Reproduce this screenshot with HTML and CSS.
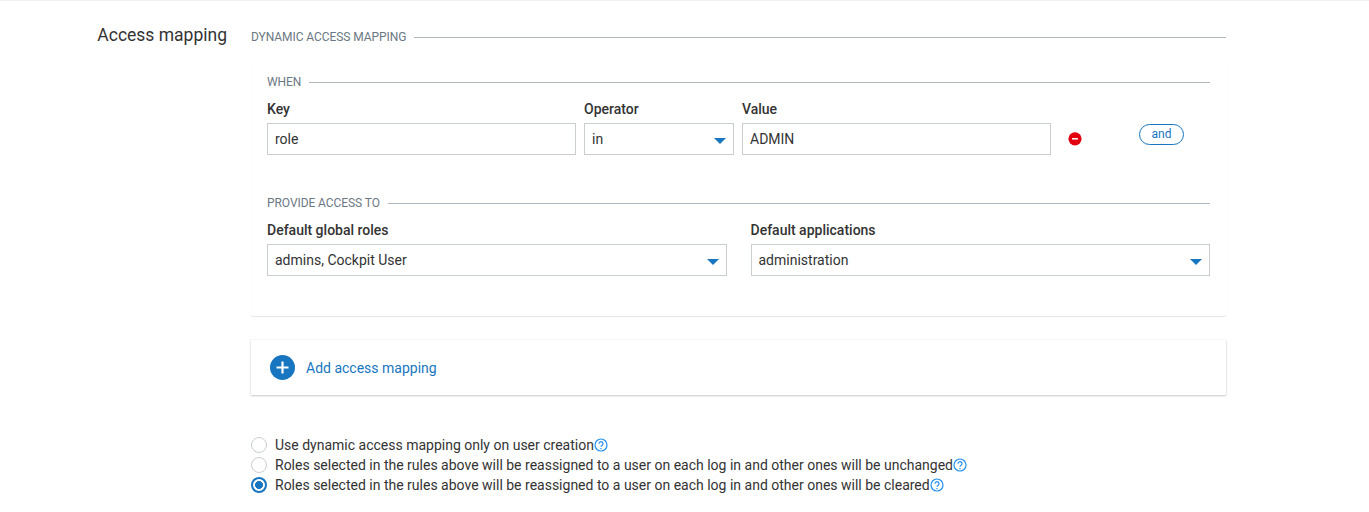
FILE: index.html
```html
<!DOCTYPE html>
<html lang="en">
<head>
<meta charset="utf-8">
<title>Access mapping</title>
<link rel="stylesheet" href="styles.css">
</head>
<body>
<main class="section">
  <h2 class="section-title">Access mapping</h2>
  <div class="content">
    <div class="legend">DYNAMIC ACCESS MAPPING</div>
    <section class="card">
      <div class="legend">WHEN</div>
      <div class="rule">
        <div class="field field-wide"><span class="label">Key</span><div class="control">role</div></div>
        <div class="field field-op"><span class="label">Operator</span><div class="control">in<svg class="caret" viewBox="0 0 12 6"><path d="M0 0h12L6 6z"/></svg></div></div>
        <div class="field field-wide"><span class="label">Value</span><div class="control">ADMIN</div></div>
        <svg class="remove" viewBox="0 0 14 14"><circle cx="7" cy="6.8" r="6.6" fill="#e3000f"/><path d="M4 6.8h6" stroke="#fff" stroke-width="1.5"/></svg>
        <button class="and" type="button">and</button>
      </div>
      <div class="legend">PROVIDE ACCESS TO</div>
      <div class="access">
        <div class="field"><span class="label">Default global roles</span><div class="control">admins, Cockpit User<svg class="caret" viewBox="0 0 12 6"><path d="M0 0h12L6 6z"/></svg></div></div>
        <div class="field"><span class="label">Default applications</span><div class="control">administration<svg class="caret" viewBox="0 0 12 6"><path d="M0 0h12L6 6z"/></svg></div></div>
      </div>
    </section>
    <section class="add">
      <svg class="plus" viewBox="0 0 26 26"><circle cx="12.5" cy="12.5" r="12.5" fill="#1776bf"/><path d="M12.5 6.5v12M6.5 12.5h12" stroke="#fff" stroke-width="2.2"/></svg>
      <span>Add access mapping</span>
    </section>
    <div class="options">
      <div class="option"><span class="radio"></span><span class="option-text">Use dynamic access mapping only on user creation</span><svg class="help" viewBox="0 0 14 14"><circle cx="7" cy="7" r="6"/><path d="M5 5.7a2 2 0 1 1 3.1 1.6Q7 8 7 8.8M7 9.9v1.3"/></svg></div>
      <div class="option"><span class="radio"></span><span class="option-text">Roles selected in the rules above will be reassigned to a user on each log in and other ones will be unchanged</span><svg class="help" viewBox="0 0 14 14"><circle cx="7" cy="7" r="6"/><path d="M5 5.7a2 2 0 1 1 3.1 1.6Q7 8 7 8.8M7 9.9v1.3"/></svg></div>
      <div class="option"><span class="radio checked"></span><span class="option-text">Roles selected in the rules above will be reassigned to a user on each log in and other ones will be cleared</span><svg class="help" viewBox="0 0 14 14"><circle cx="7" cy="7" r="6"/><path d="M5 5.7a2 2 0 1 1 3.1 1.6Q7 8 7 8.8M7 9.9v1.3"/></svg></div>
    </div>
  </div>
</main>
</body>
</html>
```
FILE: styles.css
```css
* { box-sizing: border-box; }
body {
  margin: 0;
  background: #fff;
  color: #333;
  font: 14px/20px Roboto, sans-serif;
}
.section {
  display: flex;
  gap: 24px;
  height: 512px;
  padding: 26px 143px 0 0;
  border-top: 1px solid #f0f0f0;
  overflow: hidden;
}
.section-title {
  width: 227px;
  margin: -4px 0 0;
  font-size: 17.5px;
  font-weight: 400;
  line-height: 24px;
  text-align: right;
}
.content { flex: 1; min-width: 0; }
.legend {
  display: flex;
  align-items: center;
  gap: 8px;
  height: 20px;
  color: #6b7883;
  font-size: 12px;
  letter-spacing: -.07px;
}
.legend::after {
  content: "";
  flex: 1;
  height: 1px;
  margin-top: 1px;
  background: #afb8bf;
}
.card {
  height: 260px;
  margin-top: 9px;
  padding: 16px;
  border-radius: 2px;
  box-shadow: 0 1px 1px rgba(0, 0, 0, .1), 0 0 1px rgba(0, 0, 0, .06);
  clip-path: inset(2px -3px -4px -3px);
}
.rule {
  display: flex;
  gap: 8px;
  height: 56px;
  margin: 7px 0 38px;
}
.field { display: flex; flex-direction: column; gap: 4px; }
.field-wide { width: 309px; }
.field-op { width: 150px; }
.label { font-weight: 500; }
.control {
  display: flex;
  align-items: center;
  justify-content: space-between;
  height: 32px;
  padding: 0 7px;
  border: 1px solid #c9cdd2;
  background: #fff;
}
.caret { width: 12px; height: 6px; margin-top: 3px; fill: #1776bf; }
.remove { width: 14px; height: 14px; margin: 33px 0 0 9px; }
.and {
  width: 45px;
  height: 21px;
  margin: 25px 0 0 49px;
  padding: 0;
  border: 1px solid #1776bf;
  border-radius: 11px;
  background: #fff;
  color: #1776bf;
  font: 12px/17px Roboto, sans-serif;
}
.access {
  display: grid;
  grid-template-columns: 1fr 1fr;
  gap: 24px;
  margin-top: 7px;
}
.add {
  display: flex;
  align-items: center;
  gap: 10px;
  height: 55px;
  margin-top: 24px;
  padding-left: 19px;
  color: #1776bf;
  box-shadow: 0 1px 2px rgba(0, 0, 0, .2), 0 0 1px rgba(0, 0, 0, .14);
}
.plus { width: 26px; height: 26px; }
.options { margin-top: 40px; }
.option { display: flex; align-items: center; height: 20px; white-space: nowrap; }
.radio {
  width: 16px;
  height: 16px;
  margin-right: 8px;
  border: 1px solid #c9cdd2;
  border-radius: 50%;
}
.radio.checked {
  border: 2px solid #1776bf;
  background: radial-gradient(circle, #1776bf 3.7px, #fff 4.3px);
}
.help {
  width: 14px;
  height: 14px;
  margin-left: .3px;
  fill: none;
  stroke: #2490f0;
  stroke-width: 1.2;
}
```
